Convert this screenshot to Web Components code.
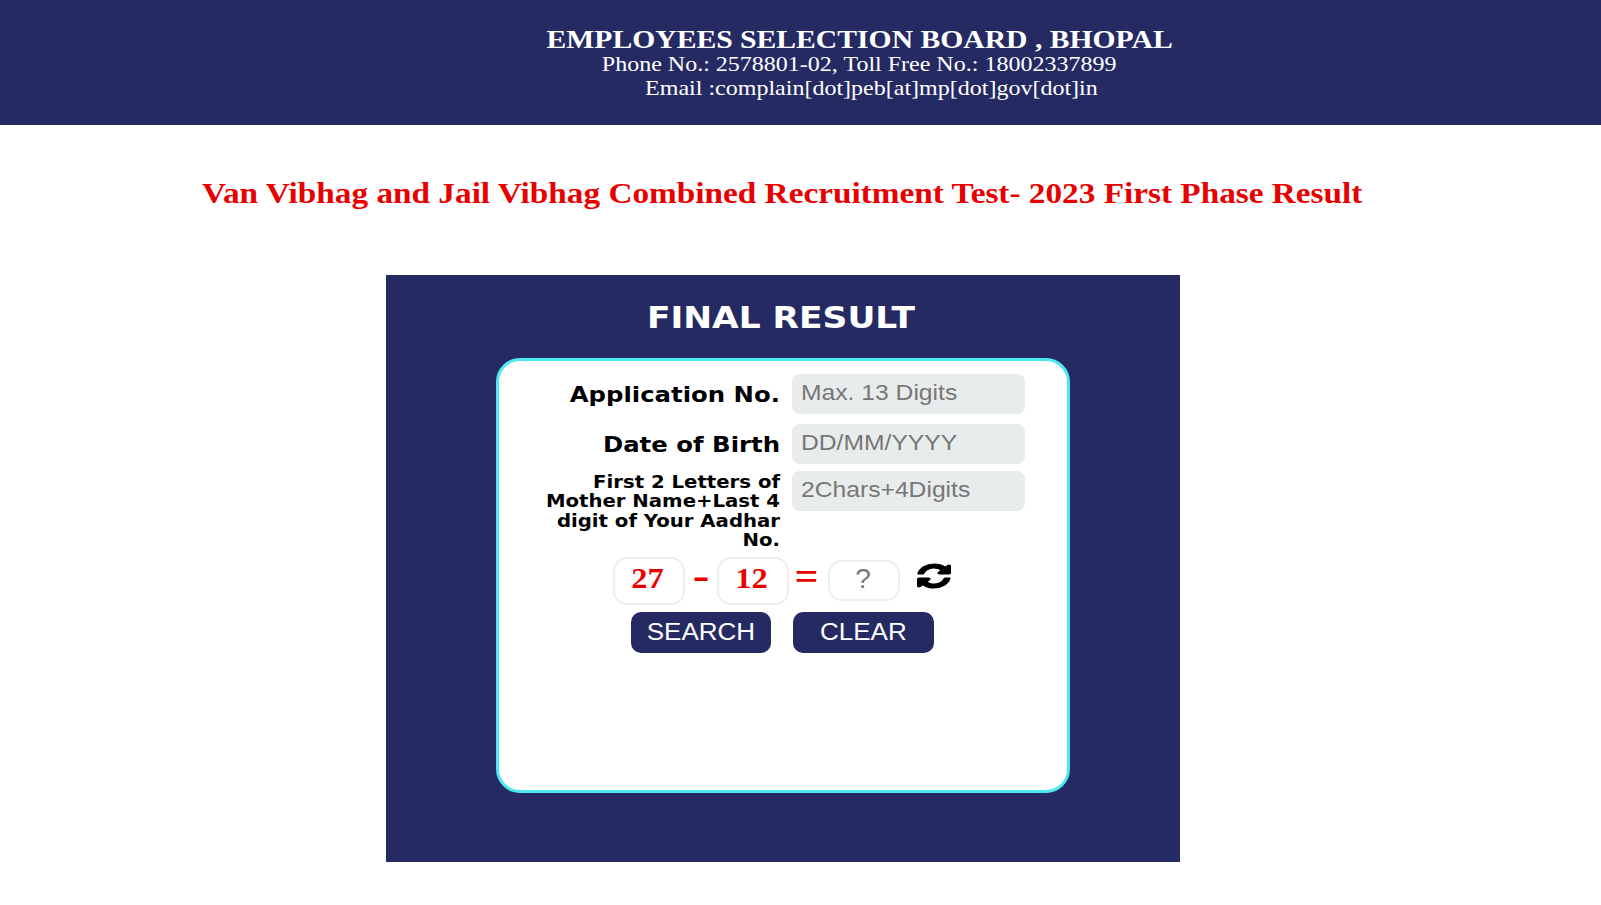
<!DOCTYPE html>
<html>
<head>
<meta charset="utf-8">
<title>Final Result</title>
<style>
html, body { margin: 0; padding: 0; background: #fff; }
body { font-family: "Liberation Serif", serif; }
</style>
</head>
<body>
<esb-header></esb-header>
<esb-notice>Van Vibhag and Jail Vibhag Combined Recruitment Test- 2023 First Phase Result</esb-notice>
<result-panel heading="FINAL RESULT">
    <form-row label="Application No." placeholder="Max. 13 Digits"></form-row>
    <form-row label="Date of Birth" placeholder="DD/MM/YYYY" gap="8"></form-row>
    <form-row label="First 2 Letters of Mother Name+Last 4 digit of Your Aadhar No." placeholder="2Chars+4Digits" small gap="5"></form-row>
    <captcha-row a="27" b="12"></captcha-row>
    <form-buttons></form-buttons>
</result-panel>

<script>
(function() {
    const NAVY = '#262a63';
    // the whole page looks stretched sideways, text needs the same
    const STRETCH = 1.147;

    class EsbHeader extends HTMLElement {
        constructor() {
            super();
            this.attachShadow({ mode: 'open' });
            this.shadowRoot.innerHTML = `
<style>
:host {
    display: block;
    height: 125px;
    box-sizing: border-box;
    padding: 27px 0 0 118px;
    background: ${NAVY};
    color: #fff;
    text-align: center;
    font-family: "Liberation Serif", serif;
}
div { width: fit-content; margin: 0 auto; transform: scaleX(1.143); }
.name { font-size: 26px; font-weight: bold; line-height: 25px; transform: scaleX(1.14); }
.line { font-size: 21px; line-height: 24px; }
.mail { padding-left: 20px; }
</style>
<div class="name">EMPLOYEES SELECTION BOARD , BHOPAL</div>
<div class="line">Phone No.: 2578801-02, Toll Free No.: 18002337899</div>
<div class="line mail">Email :complain[dot]peb[at]mp[dot]gov[dot]in</div>`;
        }
    }

    class EsbNotice extends HTMLElement {
        constructor() {
            super();
            this.attachShadow({ mode: 'open' });
            this.shadowRoot.innerHTML = `
<style>
:host {
    display: block;
    padding: 50px 0 0 202px;
    height: 100px;
    color: #e80000;
    font: bold 29px/36px "Liberation Serif", serif;
    white-space: nowrap;
}
span { display: inline-block; transform: scaleX(${STRETCH}); transform-origin: left; }
</style>
<span><slot></slot></span>`;
        }
    }

    class ResultPanel extends HTMLElement {
        constructor() {
            super();
            this.attachShadow({ mode: 'open' });
            this.shadowRoot.innerHTML = `
<style>
:host {
    display: block;
    width: 794px;
    height: 587px;
    margin-left: 386px;
    box-sizing: border-box;
    padding: 24px 0 0 110px;
    background: ${NAVY};
}
h2 {
    margin: 0 0 22px;
    width: 570px;
    color: #fff;
    text-align: center;
    font: bold 30px/37px "DejaVu Sans", sans-serif;
    transform: scaleX(${STRETCH});
}
.box {
    width: 574px;
    height: 435px;
    box-sizing: border-box;
    padding: 13px 0 0;
    background: #fff;
    border: 3px solid #4ee8f0;
    border-radius: 24px;
}
</style>
<h2></h2>
<div class="box"><slot></slot></div>`;
            this.shadowRoot.querySelector('h2').textContent = this.getAttribute('heading');
        }
    }

    class FormRow extends HTMLElement {
        constructor() {
            super();
            this.attachShadow({ mode: 'open' });
            this.shadowRoot.innerHTML = `
<style>
:host {
    display: grid;
    grid-template-columns: 281px 233px;
    column-gap: 12px;
    font-family: "DejaVu Sans", sans-serif;
}
.label {
    text-align: right;
    color: #000;
    font-weight: bold;
    font-size: 21px;
    line-height: 42px;
    padding-left: 90px;
    transform: scaleX(1.16);
    transform-origin: right;
}
:host([small]) .label {
    font-size: 17.5px;
    line-height: 19.4px;
    padding: 2px 0 0 66px;
    transform: scaleX(1.125);
}
.field {
    height: 40px;
    border-radius: 8px;
    background: #e9ecec;
    color: #777;
    font: 21.5px/39px "Liberation Sans", sans-serif;
}
.field span {
    display: inline-block;
    margin-left: 9px;
    transform: scaleX(${STRETCH});
    transform-origin: left;
}
</style>
<div class="label"></div>
<div class="field"><span></span></div>`;
            this.shadowRoot.querySelector('.label').textContent = this.getAttribute('label');
            this.shadowRoot.querySelector('.field span').textContent = this.getAttribute('placeholder');
            this.style.marginTop = (this.getAttribute('gap') || 0) + 'px';
        }
    }

    class CaptchaRow extends HTMLElement {
        constructor() {
            super();
            this.attachShadow({ mode: 'open' });
            this.shadowRoot.innerHTML = `
<style>
:host {
    display: flex;
    align-items: center;
    height: 48px;
    margin-top: 6px;
    padding-left: 114px;
    font-family: "Liberation Serif", serif;
}
.num, .ans {
    box-sizing: border-box;
    width: 72px;
    text-align: center;
    border: 2px solid #eee;
    border-radius: 14px;
    background: #fff;
}
.num {
    height: 48px;
    padding-right: 3px;
    color: #e80000;
    font: bold 29px/39px "Liberation Serif", serif;
}
.num span { display: inline-block; transform: scaleX(1.12); }
.op {
    text-align: center;
    color: #e80000;
    font: bold 40px/44px "Liberation Serif", serif;
}
.minus { width: 32px; margin-top: -10px; transform: scaleX(1.25); }
.equals { width: 35px; margin-top: -8px; transform: scaleX(1.05); }
.ans {
    height: 41px;
    margin-left: 4px;
    padding-right: 2px;
    color: #777;
    font: 28px/34px "Liberation Sans", sans-serif;
}
svg { width: 38px; height: 28px; margin: -10px 0 0 15px; }
</style>
<div class="num"><span id="a"></span></div>
<div class="op minus">-</div>
<div class="num"><span id="b"></span></div>
<div class="op equals">=</div>
<div class="ans">?</div>
<svg viewBox="0 0 1792 1792" preserveAspectRatio="none"><path fill="#000" stroke="#000" stroke-width="70" d="M1639 1056q0 5-1 7-64 268-268 434.5t-478 166.5q-146 0-282.5-55t-243.5-157l-129 129q-19 19-45 19t-45-19-19-45v-448q0-26 19-45t45-19h448q26 0 45 19t19 45-19 45l-137 137q71 66 161 102t187 36q134 0 250-65t186-179q11-17 53-117 8-23 30-23h192q13 0 22.5 9.5t9.5 22.5zm25-800v448q0 26-19 45t-45 19h-448q-26 0-45-19t-19-45 19-45l138-138q-148-137-349-137-134 0-250 65t-186 179q-11 17-53 117-8 23-30 23h-199q-13 0-22.5-9.5t-9.5-22.5v-7q65-268 270-434.5t480-166.5q146 0 284 55.5t245 156.5l130-129q19-19 45-19t45 19 19 45z"/></svg>`;
            this.shadowRoot.querySelector('#a').textContent = this.getAttribute('a');
            this.shadowRoot.querySelector('#b').textContent = this.getAttribute('b');
        }
    }

    class FormButtons extends HTMLElement {
        constructor() {
            super();
            this.attachShadow({ mode: 'open' });
            this.shadowRoot.innerHTML = `
<style>
:host {
    display: flex;
    gap: 22px;
    margin-top: 7px;
    padding-left: 132px;
}
button {
    width: 140px;
    height: 41px;
    padding: 0;
    border: 0;
    border-radius: 10px;
    background: ${NAVY};
    color: #fff;
    font: 23px/40px "Liberation Sans", sans-serif;
}
button:last-child { width: 141px; }
span { display: inline-block; transform: scaleX(1.13); }
</style>
<button type="button"><span>SEARCH</span></button>
<button type="button"><span>CLEAR</span></button>`;
        }
    }

    customElements.define('esb-header', EsbHeader);
    customElements.define('esb-notice', EsbNotice);
    customElements.define('result-panel', ResultPanel);
    customElements.define('form-row', FormRow);
    customElements.define('captcha-row', CaptchaRow);
    customElements.define('form-buttons', FormButtons);
})();
</script>
</body>
</html>
